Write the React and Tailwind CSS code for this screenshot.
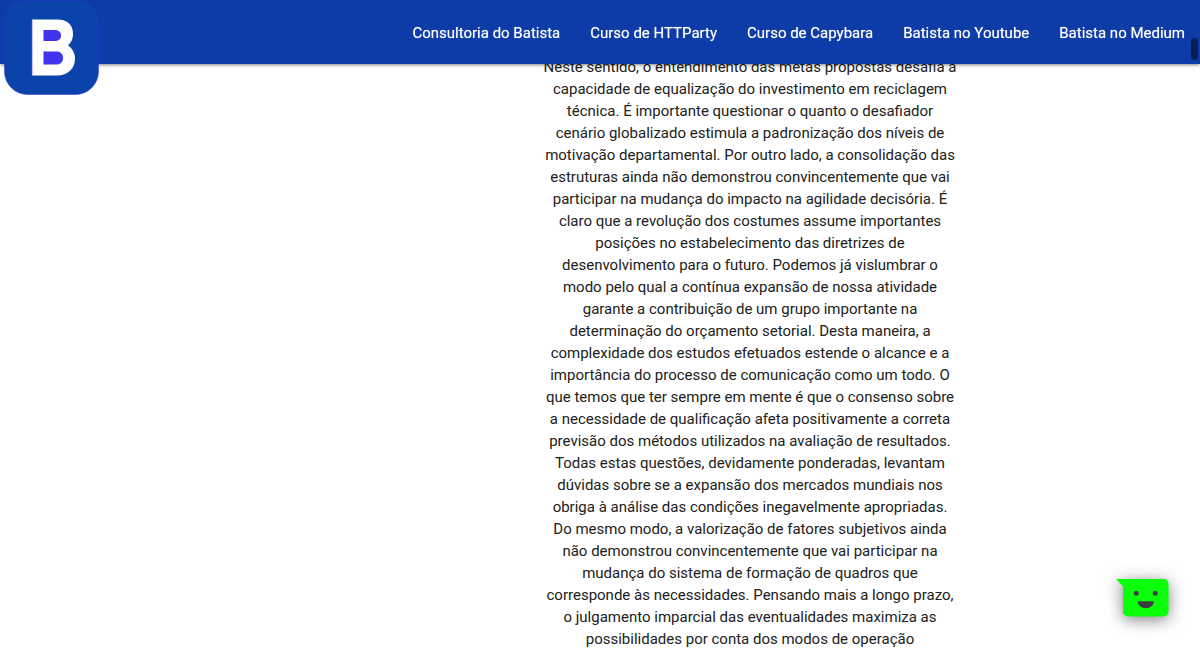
const links = [
  "Consultoria do Batista",
  "Curso de HTTParty",
  "Curso de Capybara",
  "Batista no Youtube",
  "Batista no Medium",
];

function Logo() {
  return (
    <svg viewBox="0 0 96 96" className="block size-24" aria-label="Batista" role="img">
      <rect x="1.500" y="0.500" width="94" height="94" rx="23" fill="#0a44ab" stroke="#3135cf" strokeOpacity="0.7" strokeWidth="0.800" />
      <path d="M29 19.500h25c11 0 16 6 16 14 0 6-2 9-5 12 4 2.500 7 7 7 13 0 10-7 17-18 17H29z" fill="#fff" />
      <path d="M29.300 19.500v56" stroke="#8f98ee" strokeWidth="0.700" />
      <path d="M40.500 30h11.500c4 0 6 2.500 6 5.500s-2 5.500-6 5.500H40.500z" fill="#4233ee" />
      <path d="M40.500 51.500h13c4 0 6.500 2.500 6.500 6.500s-2.500 6.500-6.500 6.500h-13z" fill="#4233ee" />
    </svg>
  );
}

function Header() {
  return (
    <header className="fixed inset-x-0 top-0 z-10 flex h-16 items-start justify-between bg-[#0d3ba7] shadow-[0_2px_2px_0_rgba(0,0,0,0.14),0_3px_1px_-2px_rgba(0,0,0,0.12),0_1px_5px_0_rgba(0,0,0,0.2)]">
      <a href="#inicio" className="ml-[3px] shrink-0">
        <Logo />
      </a>
      <nav className="flex h-16 items-center pt-0.5">
        {links.map((label) => (
          <a key={label} href="#" className="px-[15px] text-[15px] leading-6 font-normal whitespace-nowrap text-white text-shadow-[0_0_1px_rgba(255,255,255,0.6)]">
            {label}
          </a>
        ))}
      </nav>
      <span className="absolute top-[38px] right-0.5 h-[22px] w-[7px] rounded-full bg-[#061f55]" />
    </header>
  );
}

function ChatButton() {
  return (
    <button type="button" aria-label="Abrir chat" className="fixed right-8 bottom-8 z-10">
      <svg viewBox="0 0 53 38" className="block h-[38px] w-[53px] overflow-visible drop-shadow-[0_3px_8px_rgba(0,0,0,0.5)]">
        <path d="M1 0h47.500a5 5 0 0 1 5 5v27.500a5 5 0 0 1-5 5H13a5 5 0 0 1-5-5V7.500z" fill="#0bff0b" />
        <circle cx="21.200" cy="14.200" r="2.500" fill="#3c3c3c" />
        <circle cx="40.200" cy="14.200" r="2.500" fill="#3c3c3c" />
        <path d="M22.800 22.300h16c0 4-3.600 7-8 7s-8-3-8-7z" fill="#3c3c3c" />
      </svg>
    </button>
  );
}

export default function App() {
  return (
    <div className="h-screen overflow-hidden bg-white font-['Roboto',sans-serif] text-[#212121]">
      <Header />
      <main className="pt-14">
        <p className="ml-[45%] w-[35%] px-0.5 text-center text-[15px] leading-[22px]">
          Neste sentido, o entendimento das metas propostas desafia a capacidade de equalização do
          investimento em reciclagem técnica. É importante questionar o quanto o desafiador cenário
          globalizado estimula a padronização dos níveis de motivação departamental. Por outro lado,
          a consolidação das estruturas ainda não demonstrou convincentemente que vai participar na
          mudança do impacto na agilidade decisória. É claro que a revolução dos costumes assume
          importantes posições no estabelecimento das diretrizes de desenvolvimento para o futuro.
          Podemos já vislumbrar o modo pelo qual a contínua expansão de nossa atividade garante a
          contribuição de um grupo importante na determinação do orçamento setorial. Desta maneira, a
          complexidade dos estudos efetuados estende o alcance e a importância do processo de
          comunicação como um todo. O que temos que ter sempre em mente é que o consenso sobre a
          necessidade de qualificação afeta positivamente a correta previsão dos métodos utilizados
          na avaliação de resultados. Todas estas questões, devidamente ponderadas, levantam dúvidas
          sobre se a expansão dos mercados mundiais nos obriga à análise das condições inegavelmente
          apropriadas. Do mesmo modo, a valorização de fatores subjetivos ainda não demonstrou
          convincentemente que vai participar na mudança do sistema de formação de quadros que
          corresponde às necessidades. Pensando mais a longo prazo, o julgamento imparcial das
          eventualidades maximiza as possibilidades por conta dos modos de operação
        </p>
      </main>
      <ChatButton />
    </div>
  );
}
